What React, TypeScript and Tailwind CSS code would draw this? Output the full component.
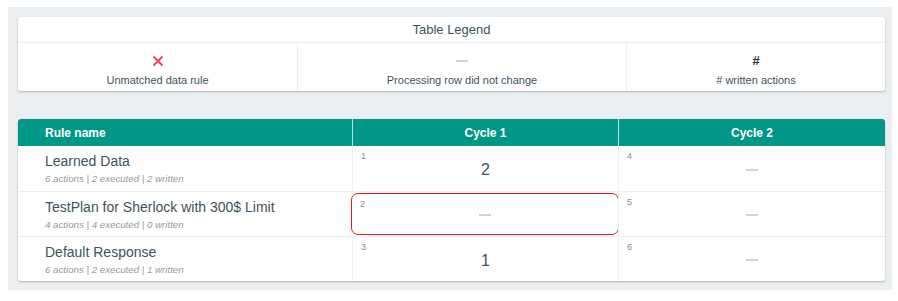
import React from 'react';

interface Rule {
  name: string;
  actions: number;
  executed: number;
  written: number;
  cells: { idx: number; value: number | null; flagged?: boolean }[];
}

const rules: Rule[] = [
  {
    name: 'Learned Data',
    actions: 6,
    executed: 2,
    written: 2,
    cells: [
      { idx: 1, value: 2 },
      { idx: 4, value: null },
    ],
  },
  {
    name: 'TestPlan for Sherlock with 300$ Limit',
    actions: 4,
    executed: 4,
    written: 0,
    cells: [
      { idx: 2, value: null, flagged: true },
      { idx: 5, value: null },
    ],
  },
  {
    name: 'Default Response',
    actions: 6,
    executed: 2,
    written: 1,
    cells: [
      { idx: 3, value: 1 },
      { idx: 6, value: null },
    ],
  },
];

const Dash = () => <div className="w-[12px] h-[2px] bg-[#cfd4d6]" />;

function Legend() {
  return (
    <div className="bg-white rounded-[3px] shadow-[0_1px_2px_rgba(0,0,0,0.25)] text-[#40535c]">
      <div className="h-[26px] flex items-center justify-center border-b border-[#eceff1] text-[13px]">
        Table Legend
      </div>
      <div className="grid grid-cols-[279px_329px_1fr] h-[48px] text-[11px]">
        <div className="flex flex-col items-center pt-[12px]">
          <svg width="12" height="12" viewBox="0 0 12 12">
            <path d="M1.5 1.5 L10.5 10.5 M10.5 1.5 L1.5 10.5" stroke="#f0414f" strokeWidth="1.8" />
          </svg>
          <span className="mt-[6px] leading-[14px]">Unmatched data rule</span>
        </div>
        <div className="flex flex-col items-center pt-[12px] border-l border-[#eceff1]">
          <div className="h-[12px] flex items-center">
            <Dash />
          </div>
          <span className="mt-[6px] leading-[14px]">Processing row did not change</span>
        </div>
        <div className="flex flex-col items-center pt-[12px] border-l border-[#eceff1]">
          <span className="h-[12px] leading-[12px] font-bold text-[13px] text-[#263238]">#</span>
          <span className="mt-[6px] leading-[14px]"># written actions</span>
        </div>
      </div>
    </div>
  );
}

function RuleTable() {
  return (
    <div className="bg-white rounded-[3px] shadow-[0_1px_2px_rgba(0,0,0,0.25)]">
      <div className="grid grid-cols-[334px_266px_1fr] h-[27px] bg-[#009688] text-white text-[12px] font-bold rounded-t-[3px]">
        <div className="flex items-center pl-[27px]">Rule name</div>
        <div className="flex items-center justify-center border-l border-[#b2dfdb]">Cycle 1</div>
        <div className="flex items-center justify-center border-l border-[#b2dfdb]">Cycle 2</div>
      </div>
      {rules.map((rule, i) => (
        <div
          key={rule.name}
          className={
            'grid grid-cols-[334px_266px_1fr] h-[45px] ' + (i > 0 ? 'border-t border-[#eceff1]' : '')
          }
        >
          <div className="pl-[27px] pt-[7px] flex flex-col">
            <span className="text-[14px] leading-[17px] text-[#40535c]">{rule.name}</span>
            <span className="text-[9.7px] italic leading-[12px] mt-[3px] text-[#949a9e]">
              {rule.actions} actions | {rule.executed} executed | {rule.written} written
            </span>
          </div>
          {rule.cells.map(cell => (
            <div
              key={cell.idx}
              className={
                cell.flagged
                  ? 'relative border border-[#e8171f] rounded-[7px] -mx-[1px] my-[1px] flex items-center justify-center'
                  : 'relative border-l border-[#eceff1] flex items-center justify-center'
              }
            >
              <span className="absolute left-[8px] top-[4px] text-[9px] text-[#78909c]">{cell.idx}</span>
              {cell.value === null ? (
                <div className="mt-[2px]">
                  <Dash />
                </div>
              ) : (
                <span className="text-[16px] mt-[3px] text-[#40535c]">{cell.value}</span>
              )}
            </div>
          ))}
        </div>
      ))}
    </div>
  );
}

export default function App() {
  return (
    <div className="w-[898px] h-[301px] bg-white pt-[7px] pl-[8px] font-['Liberation_Sans',Arial,sans-serif]">
      <div className="w-[884px] h-[283px] bg-[#eceff1] pt-[10px] pl-[10px] pr-[7px]">
        <Legend />
        <div className="mt-[28px]">
          <RuleTable />
        </div>
      </div>
    </div>
  );
}
